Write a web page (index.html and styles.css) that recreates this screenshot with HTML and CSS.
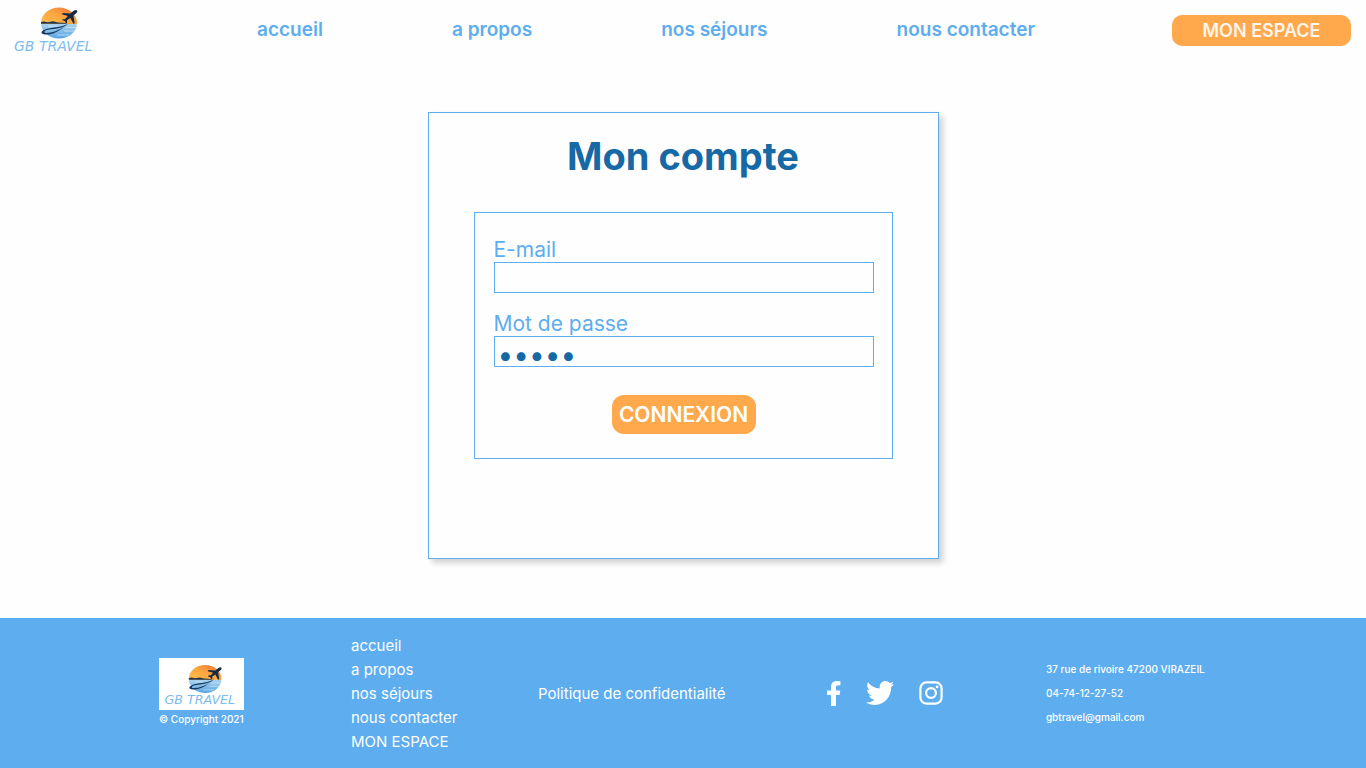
FILE: index.html
```html
<!DOCTYPE html>
<html lang="fr">
<head>
<meta charset="utf-8">
<meta name="viewport" content="width=device-width, initial-scale=1">
<title>GB Travel - Mon compte</title>
<link rel="stylesheet" href="styles.css">
</head>
<body>
<svg class="defs" width="0" height="0" aria-hidden="true">
  <defs>
    <linearGradient id="sky" x1="0" y1="1" x2="1" y2="0">
      <stop offset="0" stop-color="#ffc04d"/>
      <stop offset="0.5" stop-color="#fba53f"/>
      <stop offset="1" stop-color="#f0693a"/>
    </linearGradient>
    <linearGradient id="sea" x1="0" y1="0" x2="0" y2="1">
      <stop offset="0" stop-color="#a9d3ee"/>
      <stop offset="1" stop-color="#4f9fe0"/>
    </linearGradient>
    <clipPath id="disc"><ellipse cx="51" cy="23" rx="18" ry="15.5"/></clipPath>
    <symbol id="logo" viewBox="0 0 94 57">
      <g clip-path="url(#disc)">
        <rect x="32" y="7" width="38" height="17" fill="url(#sky)"/>
        <rect x="32" y="24" width="38" height="16" fill="url(#sea)"/>
        <path d="M32 22.200l4-.8 4 .8 5-1 5 1.300 8 .5v.8H32z" fill="#21354f"/>
        <path d="M40 26.200h9M58 27.500h10M56 31h12M49 35h12" stroke="#d6edfa" stroke-width=".7"/>
      </g>
      <path d="M61 23C55 27.500 46 27 39 28.700C33 30.500 31.500 33.500 36.500 34.500C44 35.200 51 31 56 27C50 30.500 44 33.200 38 33C35.500 32.500 36 30.500 40 29.800C48 28.500 56 28.500 61 23z" fill="#173a61"/>
      <path d="M69 10.500c.7.900 0 2-1 2.900l-2.600 2.200 1.300 7.600-1.300.5-3.100-5.700-3.400 2.300.2 2.700-.9.400-1.500-2.500-2.500-.8.500-.9 2.500-.3 2.700-2.900-6-1.700.8-1.200 7.600.4 3.400-2.800c1.300-.9 2.700-1.100 3.300-.2z" fill="#142b47"/>
      <text x="6" y="51" class="logo-text">GB TRAVEL</text>
    </symbol>
  </defs>
</svg>

<header class="site-header">
  <a class="brand" href="#" aria-label="GB Travel"><svg class="brand-logo"><use href="#logo"/></svg></a>
  <nav class="main-nav" aria-label="Navigation principale">
    <a href="#">accueil</a>
    <a href="#">a propos</a>
    <a href="#">nos séjours</a>
    <a href="#">nous contacter</a>
  </nav>
  <a class="account-link" href="#">MON ESPACE</a>
</header>

<main class="page">
  <section class="card">
    <h1>Mon compte</h1>
    <form class="login">
      <div class="field">
        <label for="email">E-mail</label>
        <input id="email" type="email">
      </div>
      <div class="field">
        <label for="password">Mot de passe</label>
        <input id="password" type="password" value="abcde">
      </div>
      <button class="submit" type="submit">CONNEXION</button>
    </form>
  </section>
</main>

<footer class="site-footer">
  <div class="footer-brand">
    <svg class="footer-logo" role="img" aria-label="GB Travel"><use href="#logo"/></svg>
    <p>© Copyright 2021</p>
  </div>
  <nav class="footer-nav" aria-label="Navigation secondaire">
    <a href="#">accueil</a>
    <a href="#">a propos</a>
    <a href="#">nos séjours</a>
    <a href="#">nous contacter</a>
    <a href="#">MON ESPACE</a>
  </nav>
  <a class="privacy" href="#">Politique de confidentialité</a>
  <div class="social">
    <a href="#" aria-label="Facebook"><svg width="14" height="25" viewBox="0 0 14 25"><path fill="#fff" d="M4 25V14H0V9.500h4V6c0-4 2.400-6 6-6 1.700 0 3.400.3 3.400.3v4h-2C9.500 4.300 9 5.400 9 6.600v2.900h4.300L12.600 14H9v11z"/></svg></a>
    <a href="#" aria-label="Twitter"><svg width="28" height="24" viewBox="0 46 512 420" preserveAspectRatio="none"><path fill="#fff" d="M459.370 151.716c.325 4.548.325 9.097.325 13.645 0 138.720-105.583 298.558-298.558 298.558-59.452 0-114.680-17.219-161.137-47.106 8.447.974 16.568 1.299 25.340 1.299 49.055 0 94.213-16.568 130.274-44.832-46.132-.975-84.792-31.188-98.112-72.772 6.498.974 12.995 1.624 19.818 1.624 9.421 0 18.843-1.300 27.614-3.573-48.081-9.747-84.143-51.980-84.143-102.985v-1.299c13.969 7.797 30.214 12.670 47.431 13.319-28.264-18.843-46.781-51.005-46.781-87.391 0-19.492 5.197-37.360 14.294-52.954 51.655 63.675 129.300 105.258 216.365 109.807-1.624-7.797-2.599-15.918-2.599-24.040 0-57.828 46.782-104.934 104.934-104.934 30.213 0 57.502 12.670 76.670 33.137 23.715-4.548 46.456-13.320 66.599-25.340-7.798 24.366-24.366 44.833-46.132 57.827 21.117-2.273 41.584-8.122 60.426-16.243-14.292 20.791-32.161 39.308-52.628 54.253z"/></svg></a>
    <a href="#" aria-label="Instagram"><svg width="24" height="24" viewBox="0 0 24 24" fill="none" stroke="#fff" stroke-width="2.200"><rect x="1.400" y="1.400" width="21.200" height="21.200" rx="6"/><circle cx="12" cy="12" r="4.900"/><circle cx="18.100" cy="5.900" r="1.400" fill="#fff" stroke="none"/></svg></a>
  </div>
  <address class="contact">
    <span>37 rue de rivoire 47200 VIRAZEIL</span>
    <span>04-74-12-27-52</span>
    <span>gbtravel@gmail.com</span>
  </address>
</footer>
</body>
</html>
```
FILE: styles.css
```css
* {
  box-sizing: border-box;
}

body {
  display: flex;
  flex-direction: column;
  min-height: 100vh;
  margin: 0;
  color: #5dadef;
  font-family: Inter, "Open Sans", sans-serif;
  background: #fefefe;
}

a {
  color: inherit;
  text-decoration: none;
}

h1,
p {
  margin: 0;
}

.defs {
  position: absolute;
}

.logo-text {
  fill: #7dbcee;
  font-family: "DejaVu Sans", sans-serif;
  font-size: 14px;
  font-style: italic;
}

/* Header */
.site-header {
  display: flex;
  align-items: center;
  height: 60px;
  padding: 0 15px 0 8px;
}

.brand {
  align-self: flex-start;
}

.brand-logo {
  display: block;
  width: 94px;
  height: 57px;
}

.main-nav {
  display: flex;
  flex: 1;
  justify-content: space-between;
  margin: 0 137px 0 155px;
  font-size: 19px;
  font-weight: 600;
  line-height: 24px;
}

.account-link {
  width: 179px;
  border-radius: 10px;
  color: #fff5ea;
  font-size: 18px;
  font-weight: 600;
  line-height: 31px;
  text-align: center;
  background: #ffa84c;
}

/* Login card */
.page {
  flex: 1;
  padding: 52px 16px 59px;
}

.card {
  max-width: 511px;
  margin: 0 auto;
  padding: 21px 45px 99px;
  border: 1px solid #5dadef;
  box-shadow: 4px 4px 6px rgba(0, 0, 0, 0.18);
}

h1 {
  margin-bottom: 34px;
  color: #1769a5;
  font-size: 38px;
  font-weight: 700;
  line-height: 44px;
  text-align: center;
}

.login {
  padding: 25px 18px 24px 19px;
  border: 1px solid #5dadef;
}

.field {
  display: flex;
  flex-direction: column;
  margin-bottom: 19px;
  font-size: 21px;
  line-height: 24px;
}

.field input {
  width: 100%;
  height: 31px;
  padding: 0 5px;
  border: 1px solid #5dadef;
  border-radius: 0;
  color: #1769a5;
  font-family: inherit;
  font-size: 20px;
  background: transparent;
}

.field input[type="password"] {
  padding: 6px 3px 0;
  font-size: 28px;
}

.submit {
  display: block;
  width: 144px;
  height: 39px;
  margin: 28px auto 0;
  padding: 0;
  border: 0;
  border-radius: 12px;
  color: #fff;
  font-family: inherit;
  font-size: 21px;
  font-weight: 600;
  background: #ffa84c;
}

/* Footer */
.site-footer {
  display: grid;
  grid-template-columns: 192fr 187fr 289fr 219fr 163fr;
  align-items: center;
  min-height: 150px;
  padding: 0 11.5% 0 159px;
  color: #fff;
  font-size: 15px;
  line-height: 24px;
  white-space: nowrap;
  background: #5dadef;
}

.footer-logo {
  display: block;
  width: 85px;
  height: 52px;
  background: #fff;
}

.footer-brand p {
  font-size: 10px;
  font-weight: 500;
  line-height: 18px;
}

.footer-nav,
.contact {
  display: flex;
  flex-direction: column;
}

.footer-nav {
  padding-top: 2px;
}

.privacy {
  padding-top: 2px;
}

.social {
  display: flex;
  align-items: center;
  gap: 25px;
}

.social svg {
  display: block;
}

.contact {
  font-size: 10px;
  font-style: normal;
  font-weight: 500;
}
```
